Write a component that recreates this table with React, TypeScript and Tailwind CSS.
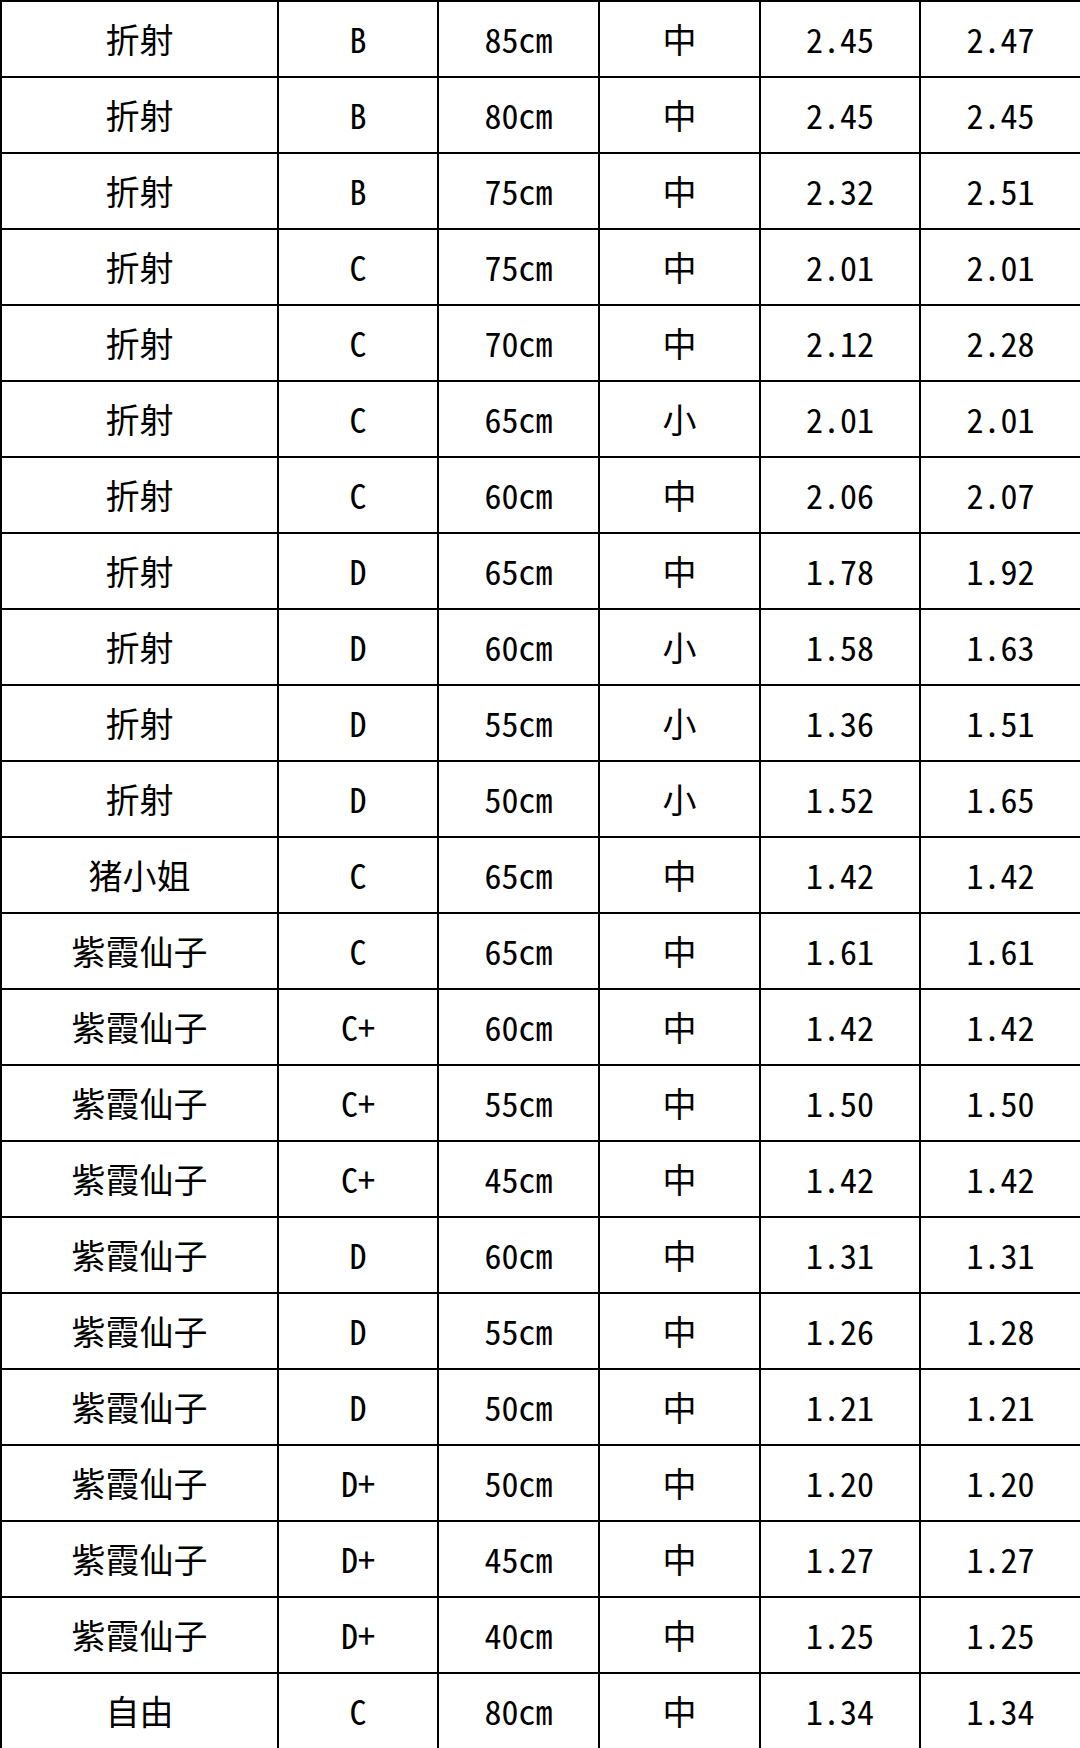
const ROWS: string[][] = [
  ["折射", "B", "85cm", "中", "2.45", "2.47"],
  ["折射", "B", "80cm", "中", "2.45", "2.45"],
  ["折射", "B", "75cm", "中", "2.32", "2.51"],
  ["折射", "C", "75cm", "中", "2.01", "2.01"],
  ["折射", "C", "70cm", "中", "2.12", "2.28"],
  ["折射", "C", "65cm", "小", "2.01", "2.01"],
  ["折射", "C", "60cm", "中", "2.06", "2.07"],
  ["折射", "D", "65cm", "中", "1.78", "1.92"],
  ["折射", "D", "60cm", "小", "1.58", "1.63"],
  ["折射", "D", "55cm", "小", "1.36", "1.51"],
  ["折射", "D", "50cm", "小", "1.52", "1.65"],
  ["猪小姐", "C", "65cm", "中", "1.42", "1.42"],
  ["紫霞仙子", "C", "65cm", "中", "1.61", "1.61"],
  ["紫霞仙子", "C+", "60cm", "中", "1.42", "1.42"],
  ["紫霞仙子", "C+", "55cm", "中", "1.50", "1.50"],
  ["紫霞仙子", "C+", "45cm", "中", "1.42", "1.42"],
  ["紫霞仙子", "D", "60cm", "中", "1.31", "1.31"],
  ["紫霞仙子", "D", "55cm", "中", "1.26", "1.28"],
  ["紫霞仙子", "D", "50cm", "中", "1.21", "1.21"],
  ["紫霞仙子", "D+", "50cm", "中", "1.20", "1.20"],
  ["紫霞仙子", "D+", "45cm", "中", "1.27", "1.27"],
  ["紫霞仙子", "D+", "40cm", "中", "1.25", "1.25"],
  ["自由", "C", "80cm", "中", "1.34", "1.34"],
];

const WIDTHS = ["w-[277px]", "w-[160px]", "w-[161px]", "w-[161px]", "w-[160px]", "w-[161px]"];

export default function App() {
  return (
    <div className="w-[1080px] h-[1748px] bg-white text-black font-['Noto_Sans_CJK_SC','Noto_Sans_CJK_JP',sans-serif] [font-feature-settings:'hwid']">
      <table className="w-[1080px] table-fixed border-collapse">
        <colgroup>
          {WIDTHS.map((w, i) => (
            <col key={i} className={w} />
          ))}
        </colgroup>
        <tbody>
          {ROWS.map((row, i) => (
            <tr key={i} className="h-[76px]">
              {row.map((cell, j) => (
                <td
                  key={j}
                  className="border-2 border-black p-0 text-center align-middle text-[34px] leading-none"
                >
                  {cell}
                </td>
              ))}
            </tr>
          ))}
        </tbody>
      </table>
    </div>
  );
}
